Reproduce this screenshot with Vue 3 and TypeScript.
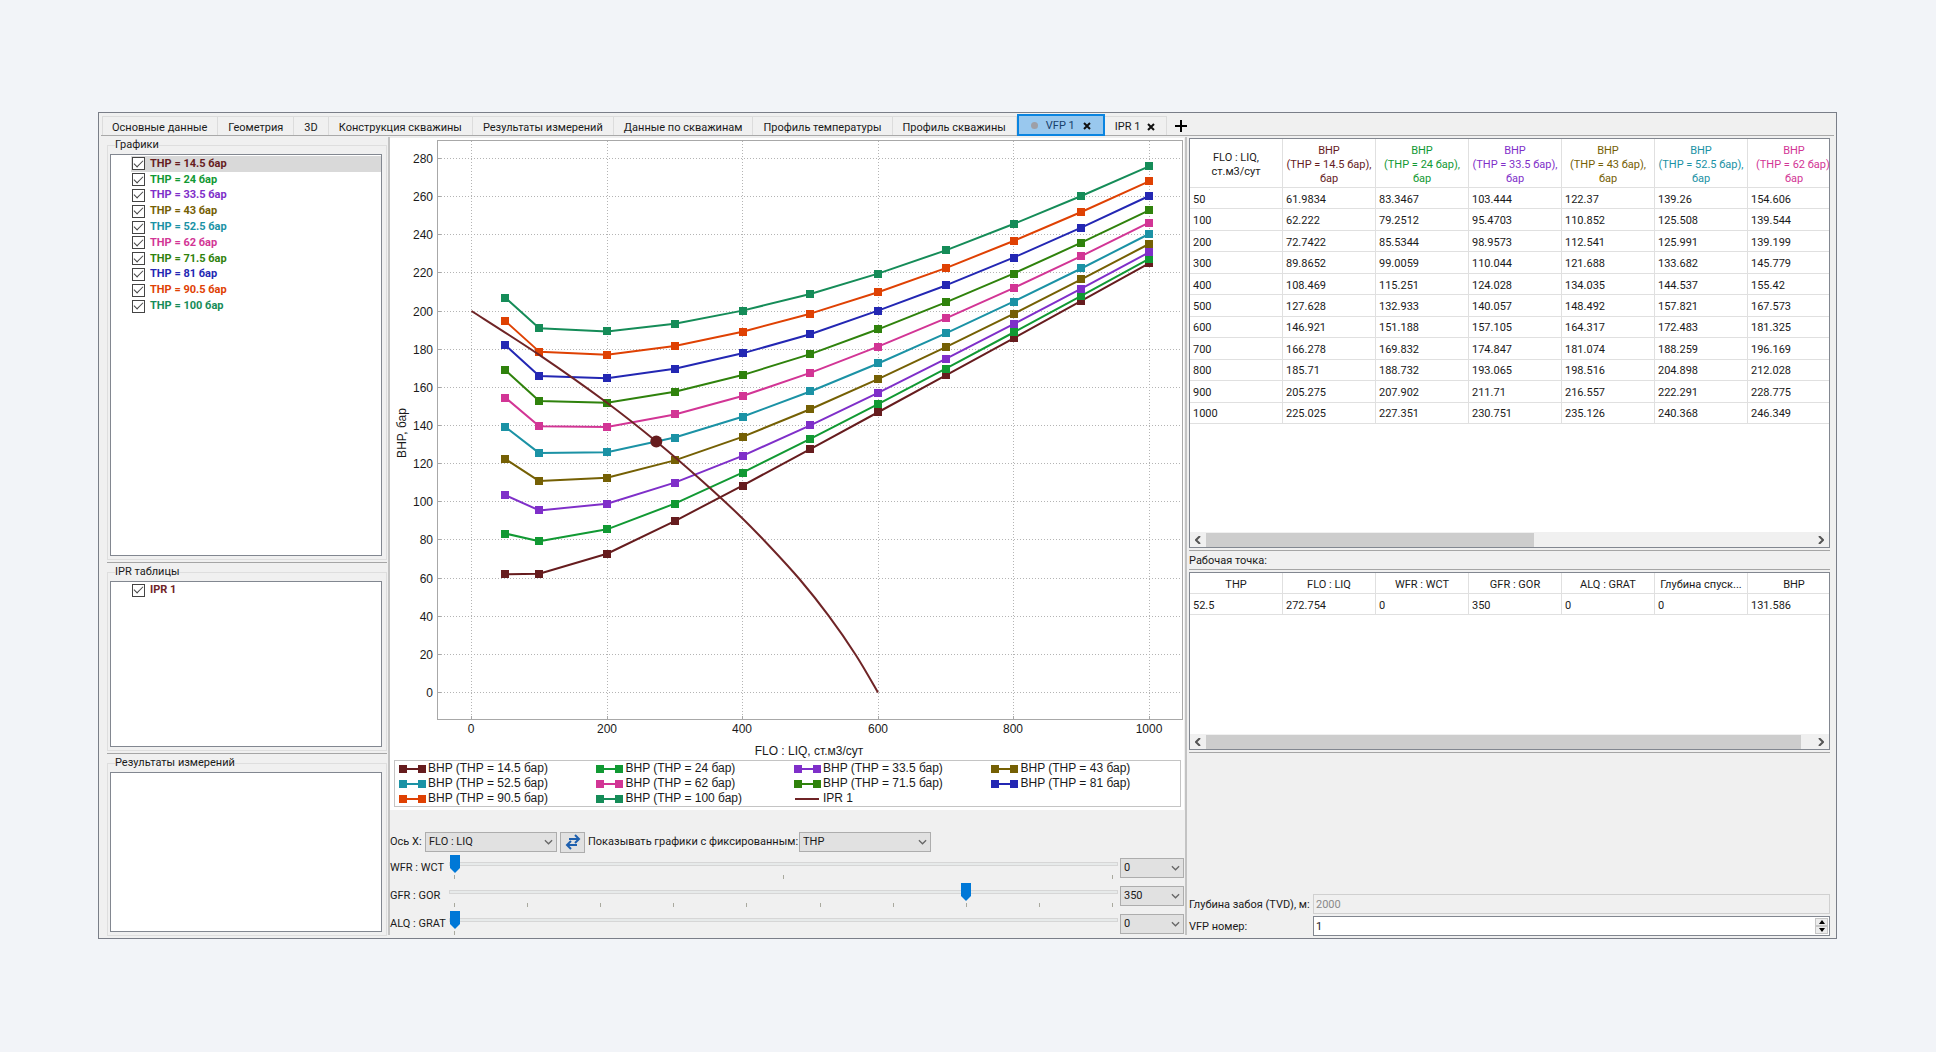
<script setup lang="ts">
import { computed, ref } from 'vue'

interface Series {
  thp: number
  color: string
  bhp: number[]
  shown: boolean
}

const plainTabs = [
  'Основные данные',
  'Геометрия',
  '3D',
  'Конструкция скважины',
  'Результаты измерений',
  'Данные по скважинам',
  'Профиль температуры',
  'Профиль скважины',
]

const rates = [50, 100, 200, 300, 400, 500, 600, 700, 800, 900, 1000]

const series = ref<Series[]>([
  { thp: 14.5, color: '#661c1e', shown: true, bhp: [61.9834, 62.222, 72.7422, 89.8652, 108.469, 127.628, 146.921, 166.278, 185.71, 205.275, 225.025] },
  { thp: 24, color: '#119933', shown: true, bhp: [83.3467, 79.2512, 85.5344, 99.0059, 115.251, 132.933, 151.188, 169.832, 188.732, 207.902, 227.351] },
  { thp: 33.5, color: '#7f2fc9', shown: true, bhp: [103.444, 95.4703, 98.9573, 110.044, 124.028, 140.057, 157.105, 174.847, 193.065, 211.71, 230.751] },
  { thp: 43, color: '#756004', shown: true, bhp: [122.37, 110.852, 112.541, 121.688, 134.035, 148.492, 164.317, 181.074, 198.516, 216.557, 235.126] },
  { thp: 52.5, color: '#1b92a5', shown: true, bhp: [139.26, 125.508, 125.991, 133.682, 144.537, 157.821, 172.483, 188.259, 204.898, 222.291, 240.368] },
  { thp: 62, color: '#d23595', shown: true, bhp: [154.606, 139.544, 139.199, 145.779, 155.42, 167.573, 181.325, 196.169, 212.028, 228.775, 246.349] },
  { thp: 71.5, color: '#2f820c', shown: true, bhp: [169, 152.8, 151.9, 157.7, 166.4, 177.4, 190.4, 204.5, 219.6, 235.8, 252.8] },
  { thp: 81, color: '#2327b3', shown: true, bhp: [182.1, 165.9, 164.7, 169.7, 177.8, 187.8, 200.2, 213.4, 228, 243.7, 260.3] },
  { thp: 90.5, color: '#df4103', shown: true, bhp: [194.7, 178.7, 177.1, 181.7, 189.1, 198.6, 209.8, 222.5, 236.7, 251.9, 268] },
  { thp: 100, color: '#158c58', shown: true, bhp: [207, 190.9, 189.3, 193.3, 200.2, 208.9, 219.6, 231.8, 245.6, 260.3, 275.8] },
])

const ipr = ref({ color: '#6f2426', shown: true })
const iprPoints: [number, number][] = [
  [0, 200], [100, 177], [200, 151.9], [272.754, 131.586], [340, 111], [397, 92.3],
  [440, 76.7], [484, 59.5], [527, 40.3], [567, 19.8], [600, 0],
]

const tableSeries = computed(() => series.value.slice(0, 6))

const px = (q: number) => 81.5 + q * 0.6775
const py = (p: number) => 554.5 - p * 1.9075

const xTicks = [0, 200, 400, 600, 800, 1000]
const yTicks = Array.from({ length: 15 }, (_, i) => i * 20)

const linePoints = (s: Series) => s.bhp.map((p, i) => `${px(rates[i])},${py(p)}`).join(' ')

/* Catmull-Rom spline through the inflow points */
const iprPath = computed(() => {
  const pts = iprPoints.map(([q, p]) => [px(q), py(p)])
  let d = `M${pts[0][0]} ${pts[0][1]}`
  for (let i = 0; i < pts.length - 1; i++) {
    const a = pts[Math.max(i - 1, 0)]
    const b = pts[i]
    const c = pts[i + 1]
    const e = pts[Math.min(i + 2, pts.length - 1)]
    d += ` C${b[0] + (c[0] - a[0]) / 6} ${b[1] + (c[1] - a[1]) / 6} ${c[0] - (e[0] - b[0]) / 6} ${c[1] - (e[1] - b[1]) / 6} ${c[0]} ${c[1]}`
  }
  return d
})

const pointHeaders = ['THP', 'FLO : LIQ', 'WFR : WCT', 'GFR : GOR', 'ALQ : GRAT', 'Глубина спуск...', 'BHP']
const pointRow = ['52.5', '272.754', '0', '350', '0', '0', '131.586']

const sliders = ref([
  { id: 'wfr', label: 'WFR : WCT', ticks: 3, max: 2, pos: 0, value: '0' },
  { id: 'gfr', label: 'GFR : GOR', ticks: 10, max: 9, pos: 7, value: '350' },
  { id: 'alq', label: 'ALQ : GRAT', ticks: 1, max: 1, pos: 0, value: '0' },
])

const axis = ref('FLO : LIQ')
const fixedBy = ref('THP')
const vfpNumber = ref(1)
</script>

<template>
  <div class="page">
    <main class="window">
      <nav class="tabs">
        <button v-for="t in plainTabs" :key="t" type="button" class="tab">{{ t }}</button>
        <button type="button" class="tab active">
          <span class="dot"></span>VFP 1
          <svg class="close" viewBox="0 0 8 8"><path d="M1 1l6 6M7 1l-6 6" /></svg>
        </button>
        <button type="button" class="tab closable">
          IPR 1
          <svg class="close" viewBox="0 0 8 8"><path d="M1 1l6 6M7 1l-6 6" /></svg>
        </button>
        <button type="button" class="add" aria-label="+">
          <svg viewBox="0 0 14 14"><path d="M7 1v12M1 7h12" /></svg>
        </button>
      </nav>

      <div class="body">
        <aside class="side">
          <fieldset class="group">
            <legend>Графики</legend>
            <div class="list charts">
              <div class="items">
                <label v-for="(s, i) in series" :key="s.thp" class="item" :class="{ selected: i === 0 }" :style="{ color: s.color }">
                  <input v-model="s.shown" type="checkbox" />THP = {{ s.thp }} бар
                </label>
              </div>
            </div>
          </fieldset>
          <div class="hsplit"></div>
          <fieldset class="group">
            <legend>IPR таблицы</legend>
            <div class="list ipr">
              <label class="item single" :style="{ color: ipr.color }"><input v-model="ipr.shown" type="checkbox" />IPR 1</label>
            </div>
          </fieldset>
          <div class="hsplit"></div>
          <fieldset class="group">
            <legend>Результаты измерений</legend>
            <div class="list results"></div>
          </fieldset>
        </aside>

        <div class="vsplit"></div>

        <section class="center">
          <div class="chart">
            <svg class="plot" viewBox="0 0 794 622">
              <g class="grid">
                <line v-for="x in xTicks" :key="'x' + x" :x1="Math.floor(px(x)) + 0.5" :x2="Math.floor(px(x)) + 0.5" y1="3" y2="578" />
                <line v-for="y in yTicks" :key="'y' + y" x1="51" x2="792" :y1="Math.floor(py(y)) + 0.5" :y2="Math.floor(py(y)) + 0.5" />
              </g>
              <g class="ticks">
                <line v-for="x in xTicks" :key="'x' + x" :x1="Math.floor(px(x)) + 0.5" :x2="Math.floor(px(x)) + 0.5" y1="578" y2="582" />
                <line v-for="y in yTicks" :key="'y' + y" x1="48" x2="51" :y1="Math.floor(py(y)) + 0.5" :y2="Math.floor(py(y)) + 0.5" />
              </g>
              <rect class="frame" x="47.5" y="2.5" width="745" height="579" />
              <text v-for="y in yTicks" :key="'ty' + y" x="43" :y="Math.floor(py(y)) + 5" text-anchor="end">{{ y }}</text>
              <text v-for="x in xTicks" :key="'tx' + x" :x="Math.floor(px(x))" y="595" text-anchor="middle">{{ x }}</text>
              <text x="419" y="617" text-anchor="middle">FLO : LIQ, ст.м3/сут</text>
              <text transform="translate(16 295) rotate(-90)" text-anchor="middle">BHP, бар</text>
              <template v-for="s in series" :key="s.thp">
                <g v-if="s.shown">
                  <polyline class="curve" :points="linePoints(s)" :stroke="s.color" />
                  <rect v-for="(p, i) in s.bhp" :key="i" :x="Math.round(px(rates[i]) - 4)" :y="Math.round(py(p) - 4)" width="8" height="8" :fill="s.color" />
                </g>
              </template>
              <path v-if="ipr.shown" class="curve" :d="iprPath" :stroke="ipr.color" />
              <circle :cx="px(272.754)" :cy="py(131.586)" r="6" fill="#661c1e" />
            </svg>
            <div class="legend">
              <div v-for="s in series" :key="s.thp" class="key">
                <svg viewBox="0 0 27 8"><path d="M4 4h19" :stroke="s.color" stroke-width="2" /><path d="M0 0h8v8H0zM19 0h8v8h-8z" :fill="s.color" /></svg>BHP (THP = {{ s.thp }} бар)
              </div>
              <div class="key">
                <svg viewBox="0 0 27 8"><path d="M1 4h24" :stroke="ipr.color" stroke-width="2" /></svg>IPR 1
              </div>
            </div>
          </div>

          <div class="axis-row">
            <label for="axis">Ось X:</label>
            <span class="combo wide">
              <select id="axis" v-model="axis"><option>FLO : LIQ</option></select>
              <svg viewBox="0 0 10 6"><path d="M1 1l4 4 4-4" /></svg>
            </span>
            <button type="button" class="swap" aria-label="⇄">
              <svg viewBox="0 0 16 16"><path d="M4 5h10M10 1l4 4-4 4M12 11H2M6 7l-4 4 4 4" /></svg>
            </button>
            <label for="fixed" class="fixed-label">Показывать графики с фиксированным:</label>
            <span class="combo wide">
              <select id="fixed" v-model="fixedBy"><option>THP</option></select>
              <svg viewBox="0 0 10 6"><path d="M1 1l4 4 4-4" /></svg>
            </span>
          </div>

          <div v-for="s in sliders" :key="s.id" class="slider-row">
            <label :for="s.id">{{ s.label }}</label>
            <div class="slider">
              <input :id="s.id" v-model.number="s.pos" type="range" min="0" :max="s.max" />
              <div class="marks"><i v-for="n in s.ticks" :key="n"></i></div>
            </div>
            <span class="combo">
              <select v-model="s.value" :aria-label="s.label"><option>{{ s.value }}</option></select>
              <svg viewBox="0 0 10 6"><path d="M1 1l4 4 4-4" /></svg>
            </span>
          </div>
        </section>

        <div class="vsplit"></div>

        <section class="right">
          <div class="box tall">
            <div class="view">
              <table class="bhp">
                <thead>
                  <tr>
                    <th>FLO : LIQ,<br />ст.м3/сут</th>
                    <th v-for="s in tableSeries" :key="s.thp" :style="{ color: s.color }">BHP<br />(THP = {{ s.thp }} бар),<br />бар</th>
                  </tr>
                </thead>
                <tbody>
                  <tr v-for="(q, i) in rates" :key="q">
                    <td>{{ q }}</td>
                    <td v-for="s in tableSeries" :key="s.thp">{{ s.bhp[i] }}</td>
                  </tr>
                </tbody>
              </table>
            </div>
            <div class="scroll">
              <svg viewBox="0 0 6 8"><path d="M5 0L1 4l4 4" /></svg>
              <div class="rail"><div class="thumb half"></div></div>
              <svg viewBox="0 0 6 8"><path d="M1 0l4 4-4 4" /></svg>
            </div>
          </div>
          <div class="hsplit"></div>
          <div class="caption">Рабочая точка:</div>
          <div class="hsplit"></div>
          <div class="box short">
            <div class="view">
              <table>
                <thead>
                  <tr><th v-for="h in pointHeaders" :key="h">{{ h }}</th></tr>
                </thead>
                <tbody>
                  <tr><td v-for="(c, i) in pointRow" :key="i">{{ c }}</td></tr>
                </tbody>
              </table>
            </div>
            <div class="scroll">
              <svg viewBox="0 0 6 8"><path d="M5 0L1 4l4 4" /></svg>
              <div class="rail"><div class="thumb most"></div></div>
              <svg viewBox="0 0 6 8"><path d="M1 0l4 4-4 4" /></svg>
            </div>
          </div>
          <div class="hsplit"></div>

          <div class="form">
            <label for="tvd">Глубина забоя (TVD), м:</label>
            <input id="tvd" type="text" value="2000" disabled />
            <label for="vfp">VFP номер:</label>
            <div class="spin">
              <input id="vfp" v-model.number="vfpNumber" type="number" min="1" />
              <div class="arrows">
                <button type="button" aria-label="+1" @click="vfpNumber++"><svg viewBox="0 0 6 4"><path d="M3 0l3 4H0z" /></svg></button>
                <button type="button" aria-label="-1" @click="vfpNumber--"><svg viewBox="0 0 6 4"><path d="M0 0h6L3 4z" /></svg></button>
              </div>
            </div>
          </div>
        </section>
      </div>
    </main>
  </div>
</template>

<style>
body {
  background: #f2f4f8;
}
</style>

<style scoped>
.page {
  min-height: 100vh;
  display: flex;
  align-items: center;
  font: 11px/14px Roboto, "Noto Sans", sans-serif;
  color: #1a1a1a;
}
.page *,
.page *::before,
.page *::after {
  box-sizing: border-box;
}
button,
select,
input {
  font: inherit;
  color: inherit;
  margin: 0;
  padding: 0;
  border-radius: 0;
}
.window {
  flex: 1;
  min-width: 0;
  margin: 0 99px 1px 98px;
  border: 1px solid #7a7e88;
  background: #f0f0f0;
}

/* tabs */
.tabs {
  display: flex;
  align-items: flex-end;
  height: 23px;
  margin: 0 2px;
  padding-left: 1px;
  border-bottom: 1px solid #a9a9a9;
}
.tab {
  height: 19px;
  padding: 3px 10px 0;
  border: 1px solid #dcdcdc;
  border-width: 1px 1px 0 0;
  background: #f0f0f0;
  white-space: nowrap;
}
.tab:first-child {
  padding-left: 9px;
  border-left-width: 1px;
}
.tab.active,
.tab.closable {
  display: flex;
  align-items: center;
  justify-content: space-between;
}
.tab.active {
  width: 88px;
  height: 22px;
  margin-bottom: -1px;
  padding: 1px 12px 0;
  border: 2px solid #0a84e0;
  background: #99c8ee;
  color: #17406b;
}
.tab.closable {
  width: 62px;
  padding: 2px 11px 0 10px;
}
.dot {
  width: 7px;
  height: 7px;
  border-radius: 50%;
  background: #9ea0a8;
}
.close {
  width: 8px;
  height: 8px;
  fill: none;
  stroke: #111;
  stroke-width: 2;
}
.add {
  height: 19px;
  padding: 0 7px;
  border: 0;
  background: none;
}
.add svg {
  display: block;
  width: 14px;
  height: 14px;
  stroke: #000;
  stroke-width: 2;
}

/* main split */
.body {
  display: grid;
  grid-template-columns: 280px 3px minmax(0, 1fr) 5px 641px;
  padding: 1px 6px 0 8px;
}
.vsplit {
  margin-bottom: 3px;
  border-left: 1px solid #f0f0f0;
}
.vsplit::before {
  content: "";
  display: block;
  width: 2px;
  height: 100%;
  background: #c3c3c3;
}
.hsplit {
  height: 1px;
  background: #a5a5a5;
}

/* sidebar */
.group {
  min-width: 0;
  margin: 0;
  padding: 1px 4px 3px 2px;
  border: 1px solid #dedede;
}
.group legend {
  margin-left: 5px;
  padding: 0;
  line-height: 16px;
}
.side .hsplit {
  margin: 2px 0 1px;
}
.list {
  padding: 0 0 0 20px;
  border: 1px solid #828790;
  background: #fff;
}
.charts {
  height: 402px;
}
.ipr {
  height: 166px;
}
.results {
  height: 160px;
}
.items {
  display: grid;
  grid-auto-rows: 1fr;
  height: 158px;
  margin-top: 1px;
}
.item {
  display: flex;
  align-items: center;
  gap: 5px;
  padding-left: 1px;
  font-weight: 700;
  white-space: nowrap;
}
.item.single {
  height: 16px;
}
.item.selected {
  background: #d9d9d9;
}
.item input {
  appearance: none;
  display: grid;
  place-items: center;
  flex: none;
  width: 13px;
  height: 13px;
  border: 1px solid #444;
  background: #fff;
}
.item input:checked::after {
  content: "";
  width: 9px;
  height: 5px;
  margin-bottom: 3px;
  border: solid #444;
  border-width: 0 0 1px 1px;
  transform: rotate(-45deg);
}

/* chart */
.center {
  min-width: 0;
  padding-top: 1px;
}
.chart {
  padding-bottom: 3px;
  background: #fff;
}
.plot {
  display: block;
  width: 100%;
  height: auto;
  font: 12px "Liberation Sans", Arial, sans-serif;
  fill: #1a1a1a;
}
.grid line {
  stroke: #b4b4b4;
  stroke-dasharray: 1 2;
}
.ticks line,
.frame {
  fill: none;
  stroke: #a8a8a8;
}
.curve {
  fill: none;
  stroke-width: 2;
  stroke-linejoin: round;
}
.legend {
  display: grid;
  grid-template-columns: repeat(3, 198fr) 189fr;
  margin: 0 3px 0 4px;
  padding-left: 4px;
  border: 1px solid #c4c4c4;
  font: 12px/15px "Liberation Sans", Arial, sans-serif;
}
.key {
  display: flex;
  align-items: center;
  gap: 2px;
  white-space: nowrap;
}
.key svg {
  width: 27px;
  height: 8px;
}

/* controls */
.axis-row {
  display: flex;
  align-items: center;
  height: 20px;
  margin: 22px 0 2px;
}
.axis-row > label:first-child {
  width: 35px;
}
.fixed-label {
  margin-right: 1px;
  white-space: nowrap;
}
.combo {
  position: relative;
  display: block;
  height: 20px;
}
.combo.wide {
  width: 132px;
}
.combo select {
  appearance: none;
  display: block;
  width: 100%;
  height: 20px;
  padding: 0 18px 0 3px;
  border: 1px solid #adadad;
  background: #e1e1e1;
}
.combo svg {
  position: absolute;
  right: 4px;
  top: 7px;
  width: 9px;
  height: 6px;
  fill: none;
  stroke: #666;
  stroke-width: 1.4;
  pointer-events: none;
}
.swap {
  width: 25px;
  height: 21px;
  margin: 0 3px;
  border: 1px solid #adadad;
  background: #e1e1e1;
}
.swap svg {
  display: block;
  width: 16px;
  height: 16px;
  margin: 0 auto;
  fill: none;
  stroke: #1d5fae;
  stroke-width: 2;
}
.slider-row {
  display: grid;
  grid-template-columns: 59px minmax(0, 1fr) 64px;
  align-items: center;
  height: 28px;
}
.slider-row label {
  white-space: nowrap;
}
.slider {
  height: 28px;
  margin-right: 2px;
}
.slider input {
  appearance: none;
  display: block;
  width: 100%;
  height: 20px;
  background: transparent;
}
.slider input::-webkit-slider-runnable-track {
  height: 4px;
  border: 1px solid #d6d6d6;
  background: #e7eaea;
}
.slider input::-webkit-slider-thumb {
  appearance: none;
  width: 10px;
  height: 18px;
  margin-top: -8px;
  background: #0078d7;
  clip-path: polygon(0 0, 100% 0, 100% 72%, 50% 100%, 0 72%);
}
.marks {
  display: flex;
  justify-content: space-between;
  padding: 1px 5px 0;
}
.marks i {
  width: 1px;
  height: 4px;
  background: #a9a99e;
}

/* right column */
.right {
  display: flex;
  flex-direction: column;
  min-width: 0;
  padding: 1px 0 2px;
}
.box {
  display: flex;
  flex-direction: column;
  border: 1px solid #828790;
  background: #fff;
}
.tall {
  height: 410px;
}
.short {
  height: 178px;
}
.view {
  flex: 1;
  min-height: 0;
  overflow: hidden;
}
table {
  width: 651px;
  table-layout: fixed;
  border-collapse: separate;
  border-spacing: 0;
}
th,
td {
  height: 21px;
  padding: 3px 0 0;
  border: solid #e0e0e0;
  border-width: 0 1px 1px 0;
  font-weight: 400;
  white-space: nowrap;
}
td {
  padding-left: 3px;
}
.bhp {
  height: 285px;
}
.bhp th {
  height: 49px;
}
.scroll {
  display: flex;
  align-items: center;
  height: 15px;
  background: #f0f0f0;
}
.scroll > svg {
  width: 6px;
  height: 8px;
  margin: 0 5px;
  fill: none;
  stroke: #555;
  stroke-width: 2;
}
.rail {
  flex: 1;
}
.thumb {
  height: 14px;
  background: #cdcdcd;
}
.half {
  width: 54%;
}
.most {
  width: 98%;
}
.right .hsplit {
  margin: 2px 0;
}
.caption {
  height: 14px;
  line-height: 16px;
}
.form {
  display: grid;
  grid-template-columns: 124px minmax(0, 1fr);
  align-items: center;
  row-gap: 2px;
  margin-top: auto;
}
.form label {
  padding-top: 2px;
}
.form input {
  width: 100%;
  height: 20px;
  padding: 1px 2px 0;
  border: 1px solid #d0d0d0;
  background: #f0f0f0;
}
.form input:disabled {
  color: #8a8a8a;
}
.spin {
  display: flex;
  height: 20px;
  padding: 0 1px 0 0;
  border: 1px solid #828790;
  background: #fff;
}
.form .spin input {
  appearance: textfield;
  flex: 1;
  min-width: 0;
  height: 18px;
  border: 0;
  background: transparent;
}
.spin input::-webkit-inner-spin-button {
  display: none;
}
.arrows {
  display: grid;
  width: 13px;
  padding: 1px 0;
}
.arrows button {
  display: grid;
  place-items: center;
  border: 1px solid #c6c6c6;
  background: #ececec;
}
.arrows svg {
  width: 6px;
  height: 4px;
}
</style>
